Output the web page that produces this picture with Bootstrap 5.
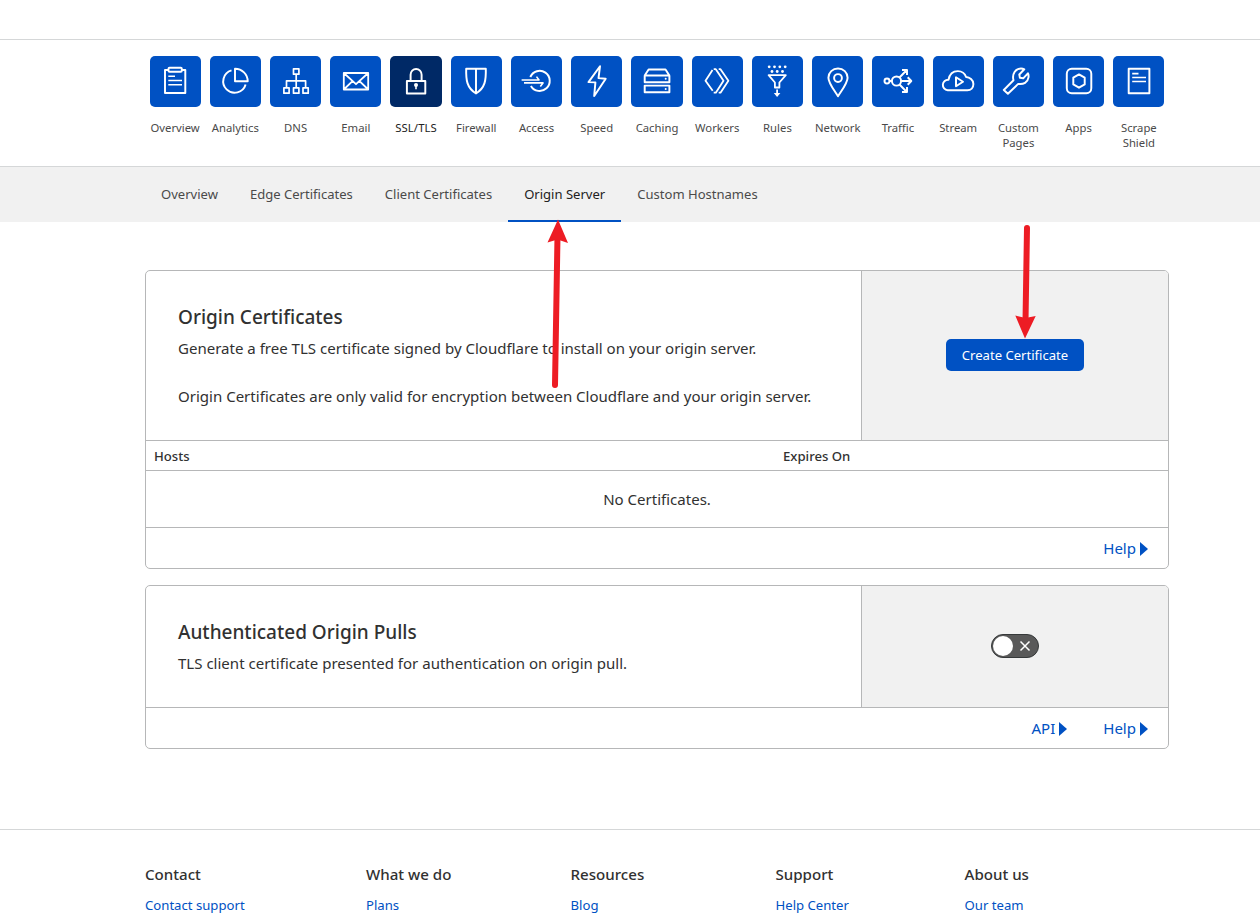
<!DOCTYPE html>
<html lang="en">
<head>
<meta charset="utf-8">
<meta name="viewport" content="width=device-width, initial-scale=1">
<title>SSL/TLS - Origin Server</title>
<link href="https://cdn.jsdelivr.net/npm/bootstrap@5.3.0/dist/css/bootstrap.min.css" rel="stylesheet">
<style>
:root{--cf-blue:#0051c3;--cf-line:#b6b7b8;--cf-soft:#d5d7d8;--cf-gray:#f1f1f1}
body{font-family:"Noto Sans","Open Sans",sans-serif;font-size:15.04px;line-height:24px;color:#313131;overflow:hidden;height:922px}
a{color:var(--cf-blue);text-decoration:none}
.wrap{width:1024px;margin-left:145px}
.topbar{height:40px;border-bottom:1px solid var(--cf-soft)}
.appnav{height:127px;border-bottom:1px solid var(--cf-soft);padding-top:16px}
.app{flex:1 1 0;min-width:0;font-size:11.3px;line-height:15px;color:#4a4a4a;text-align:center}
.app .tile{display:block;width:51.2px;height:51px;margin:0 auto 13px;border-radius:5px;background:var(--cf-blue)}
.app.active{color:#222;letter-spacing:.1px}
.app.active .tile{background:#002966}
.tile svg{display:block;width:51px;height:51px;fill:none;stroke:#fff;stroke-width:1.95;stroke-linejoin:round}
.tile .dot{fill:#fff;stroke:none}
.app span{white-space:pre-line}
.subnav{height:55px;background:var(--cf-gray);font-size:13.05px}
.subnav a{height:55px;padding:0 16px;line-height:55px;color:#4a4a4a;white-space:nowrap}
.subnav a.active{color:#222;border-bottom:2px solid var(--cf-blue)}
.panel{border:1px solid var(--cf-line);border-radius:5px;overflow:hidden;background:#fff}
.panel-main{width:715px;padding:32px;white-space:nowrap}
.panel-side{border-left:1px solid var(--cf-line);background:var(--cf-gray);padding-bottom:2px}
.panel h2{font-size:19px;line-height:28px;font-weight:500;margin:0 0 5px}
.bline{border-bottom:1px solid var(--cf-line)}
.btn-create{width:138px;height:32px;padding:0;border-radius:5px;background:var(--cf-blue);color:#fff;font-size:13.1px;line-height:32px;border:0;white-space:nowrap}
.thead-row{height:30px;font-size:13.15px;line-height:30px;font-weight:500}
.panel-foot{height:40px;line-height:40px;padding-right:20px;gap:36px}
.caret{display:inline-block;border-left:8px solid var(--cf-blue);border-top:7px solid transparent;border-bottom:7px solid transparent;margin-left:4px;vertical-align:-2px}
.switch{width:48px;height:24px;border-radius:12px;background:#595959;border:1px solid #36393a;padding:0 0 0 1px}
.switch i{width:20px;height:20px;border-radius:50%;background:#fff}
.site-foot{margin-top:80px;border-top:1px solid var(--cf-soft);padding-top:32px}
.site-foot h3{font-size:15.1px;line-height:24px;font-weight:500;margin:0 0 7px}
.site-foot a{font-size:13.15px;line-height:24px;display:block}
.foot-grid{display:grid;grid-template-columns:221px 204.5px 205px 189px 1fr;white-space:nowrap}
.notes{position:absolute;left:0;top:0;pointer-events:none}
.t{display:inline-block}
</style>
</head>
<body>
<header class="topbar"></header>
<nav class="appnav"><div class="wrap d-flex">
<a class="app" href="#"><span class="tile"><svg viewBox="0 0 51 51"><path d="M18.500 14H15v23h20.300V14H32"/><rect x="18.500" y="11.800" width="13.300" height="4" rx="1"/><path d="M18.300 20.300H25M18.300 24.500H32M18.300 28.700H32" stroke-width="1.600"/></svg></span><span class="t">Overview</span></a>
<a class="app" href="#"><span class="tile"><svg viewBox="0 0 51 51"><path d="M21.500 14.400A11.400 11.400 0 1 0 35.600 28.500"/><path d="M25 12.700V25.300H37.700A12.600 12.600 0 0 0 25 12.700z"/></svg></span><span class="t">Analytics</span></a>
<a class="app" href="#"><span class="tile"><svg viewBox="0 0 51 51"><path d="M23.500 12.800h5.400v5.400h-5.400zM13.900 31.800h5.200v5.400h-5.200zM23.500 31.800h5.400v5.400h-5.400zM33 31.800h5.200v5.400H33zM26.200 18.200v13.600M16.500 31.800v-7h19.100v7" stroke-width="1.700"/></svg></span><span class="t">DNS</span></a>
<a class="app" href="#"><span class="tile"><svg viewBox="0 0 51 51"><path d="M13.800 17h24.400v16.500H13.800zM13.800 17 26 28.200 38.200 17M13.800 33.500l8.700-8.400M38.200 33.500l-8.700-8.400" stroke-width="1.800"/></svg></span><span class="t">Email</span></a>
<a class="app active" href="#"><span class="tile"><svg viewBox="0 0 51 51"><path d="M16.900 25h18.400v12.500H16.900zM20.600 25v-6.300a5.500 5.800 0 0 1 11 0V25"/><circle class="dot" cx="26" cy="28.900" r="2"/><path d="M26 29v4.300" stroke-width="1.600"/></svg></span><span class="t">SSL/TLS</span></a>
<a class="app" href="#"><span class="tile"><svg viewBox="0 0 51 51"><path d="M15.200 12.800h19.600c.3 11-.5 19-9.800 24.600-9.300-5.600-10.100-13.600-9.800-24.600zM25 12.800v24.600"/></svg></span><span class="t">Firewall</span></a>
<a class="app" href="#"><span class="tile"><svg viewBox="0 0 51 51"><path d="M19.300 21A10.100 10.100 0 1 1 19.900 30"/><path d="M10.600 24H28L25.500 20.600M13 26.900H32L29.300 30.500" stroke-width="1.600"/></svg></span><span class="t">Access</span></a>
<a class="app" href="#"><span class="tile"><svg viewBox="0 0 51 51"><path d="M29 10.300 17.500 26.100l6.900.3L23.200 40 34.700 22.700l-7.200-.6z"/></svg></span><span class="t">Speed</span></a>
<a class="app" href="#"><span class="tile"><svg viewBox="0 0 51 51"><path d="M13.700 19.500h24.700v6.700H13.700zM13.700 29.600h24.700v6.700H13.700zM13.700 19.500l3.900-6h16.900l3.900 6"/><circle class="dot" cx="34.700" cy="22.800" r="1"/><circle class="dot" cx="34.700" cy="32.900" r="1"/></svg></span><span class="t">Caching</span></a>
<a class="app" href="#"><span class="tile"><svg viewBox="0 0 51 51"><path d="M20.500 14 13.500 24.800l7.200 10M21.700 13.200h2.100l7.700 11.600-7.700 11.900h-2.100M26.700 13.200h1.800l7.900 11.600-7.900 11.900h-1.800" stroke-width="1.800"/></svg></span><span class="t">Workers</span></a>
<a class="app" href="#"><span class="tile"><svg viewBox="0 0 51 51"><g class="dot"><circle cx="17.200" cy="10.800" r="1.400"/><circle cx="22.500" cy="10.800" r="1.400"/><circle cx="27.800" cy="10.800" r="1.400"/><circle cx="33.200" cy="10.800" r="1.400"/><circle cx="20" cy="15.500" r="1.400"/><circle cx="25.200" cy="15.500" r="1.400"/><circle cx="30.500" cy="15.500" r="1.400"/><path d="M21.800 37h6.600L25.100 41z"/></g><path d="M16.600 19.200h17.200L27.400 26.500v5h-4.500v-5zM25.100 33.500V39" stroke-width="1.800"/></svg></span><span class="t">Rules</span></a>
<a class="app" href="#"><span class="tile"><svg viewBox="0 0 51 51"><path d="M26 40.200C22 34 16.400 27 16.400 21.700a9.600 9.300 0 0 1 19.200 0C35.600 27 30 34 26 40.200z"/><circle cx="26" cy="22" r="3.900"/></svg></span><span class="t">Network</span></a>
<a class="app" href="#"><span class="tile"><svg viewBox="0 0 51 51"><circle cx="15" cy="25" r="2.500"/><circle cx="24.500" cy="25" r="4.600"/><path d="M17.500 25h2.400M29.100 25h10M35.700 21.300 39.300 25l-3.600 3.700M27.500 21.500l7.300-7.500M30 14h5v5M27.500 28.500l7.300 7.500M30 36h5v-5"/></svg></span><span class="t">Traffic</span></a>
<a class="app" href="#"><span class="tile"><svg viewBox="0 0 51 51"><path d="M14.700 34.200a5.200 5.200 0 0 1 .8-10.500c1-5.200 4.500-8.600 9.300-8.600 4 0 7 2.200 8.300 5.900 3.400.2 7.300 2.700 7.300 6.900 0 3.800-2.500 6.300-6 6.300zM23 21.300v9l7-4.500z"/></svg></span><span class="t">Stream</span></a>
<a class="app" href="#"><span class="tile"><svg viewBox="0 0 51 51"><path d="M10.800 34 20.500 24.300C18.800 18 22.500 12.500 28 12.500c1.300 0 2.400.3 3.300.8l-5 5.200.6 3.300 3.300.5 4.700-5c.7 1.300.8 2.600.6 4-.8 5-5 7.500-10.300 6.600L14.900 37.800z"/></svg></span><span class="t">Custom
Pages</span></a>
<a class="app" href="#"><span class="tile"><svg viewBox="0 0 51 51"><rect x="13.800" y="12.800" width="24.500" height="24.500" rx="5"/><path d="M26 18.400l5.700 3.300v6.700L26 31.700l-5.700-3.300v-6.700z"/></svg></span><span class="t">Apps</span></a>
<a class="app" href="#"><span class="tile"><svg viewBox="0 0 51 51"><path d="M15.700 12.700h20.700v24.600H15.700z"/><path d="M19.200 17.600h6.300M19.200 21.500H33M19.200 25.500H33" stroke-width="1.600"/></svg></span><span class="t">Scrape
Shield</span></a>
</div></nav>
<nav class="subnav"><div class="wrap d-flex">
<a href="#"><span class="t">Overview</span></a><a href="#"><span class="t">Edge Certificates</span></a><a href="#"><span class="t">Client Certificates</span></a><a class="active" href="#"><span class="t">Origin Server</span></a><a href="#"><span class="t">Custom Hostnames</span></a>
</div></nav>
<main class="wrap pt-5">
<section class="panel mb-3">
  <div class="d-flex bline" style="height:170px">
    <div class="panel-main"><h2><span class="t">Origin Certificates</span></h2><p class="mb-4"><span class="t">Generate a free TLS certificate signed by Cloudflare to install on your origin server.</span></p><p class="mb-0"><span class="t">Origin Certificates are only valid for encryption between Cloudflare and your origin server.</span></p></div>
    <div class="panel-side flex-grow-1 d-flex align-items-center justify-content-center"><button class="btn btn-create" type="button"><span class="t">Create Certificate</span></button></div>
  </div>
  <div class="d-flex bline thead-row ps-2"><div style="width:629px"><span class="t">Hosts</span></div><div><span class="t">Expires On</span></div></div>
  <div class="bline text-center" style="height:57px;line-height:56px"><span class="t">No Certificates.</span></div>
  <div class="panel-foot d-flex justify-content-end"><a href="#"><span class="t">Help</span><span class="caret"></span></a></div>
</section>
<section class="panel">
  <div class="d-flex bline" style="height:122px">
    <div class="panel-main"><h2><span class="t">Authenticated Origin Pulls</span></h2><p class="mb-0"><span class="t">TLS client certificate presented for authentication on origin pull.</span></p></div>
    <div class="panel-side flex-grow-1 d-flex align-items-center justify-content-center"><div class="switch d-flex align-items-center"><i></i><svg width="24" height="22" viewBox="0 0 24 22"><path d="M7.500 6.500l9 9M16.500 6.500l-9 9" stroke="#fff" stroke-width="1.500"/></svg></div></div>
  </div>
  <div class="panel-foot d-flex justify-content-end"><a href="#"><span class="t">API</span><span class="caret"></span></a><a href="#"><span class="t">Help</span><span class="caret"></span></a></div>
</section>
</main>
<footer class="site-foot"><div class="wrap foot-grid">
<div><h3><span class="t">Contact</span></h3><a href="#"><span class="t">Contact support</span></a></div>
<div><h3><span class="t">What we do</span></h3><a href="#"><span class="t">Plans</span></a></div>
<div><h3><span class="t">Resources</span></h3><a href="#"><span class="t">Blog</span></a></div>
<div><h3><span class="t">Support</span></h3><a href="#"><span class="t">Help Center</span></a></div>
<div><h3><span class="t">About us</span></h3><a href="#"><span class="t">Our team</span></a></div>
</div></footer>
<svg class="notes" width="1260" height="922" viewBox="0 0 1260 922" fill="#ed1c24" stroke="#ed1c24"><path d="M555 385 557.500 236M1027 228 1025.500 322" stroke-width="6" stroke-linecap="round"/><path d="M558 219.500 568 243 557.500 239.500 547.500 242.500zM1025 338.500 1015.300 315.500 1025.500 318 1035.700 316z" stroke="none"/></svg>
<script src="https://cdn.jsdelivr.net/npm/bootstrap@5.3.0/dist/js/bootstrap.bundle.min.js"></script>
</body>
</html>
